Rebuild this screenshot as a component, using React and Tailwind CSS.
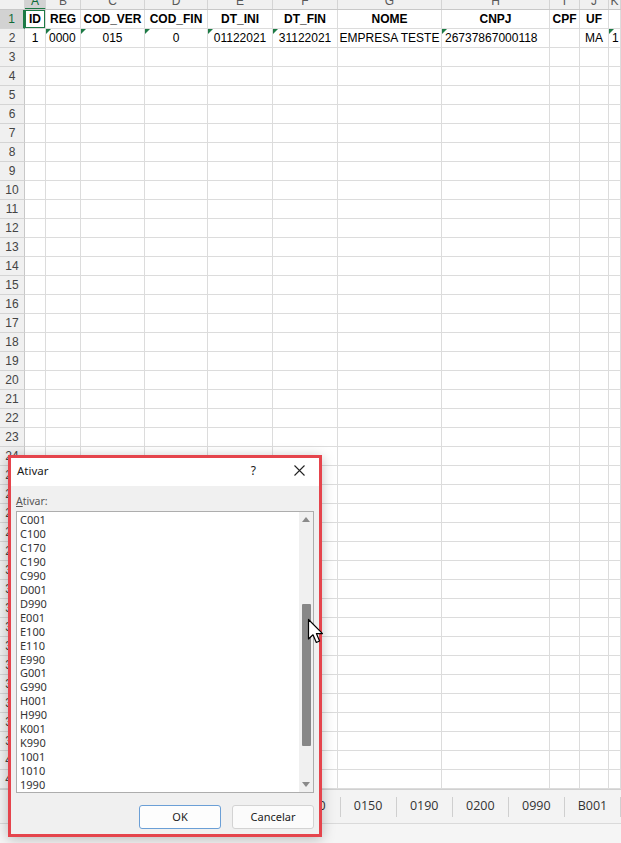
import React from 'react';

const COLS = ['A', 'B', 'C', 'D', 'E', 'F', 'G', 'H', 'I', 'J', 'K'];
const GRID = 'grid grid-cols-[25px_21px_35px_64px_63px_65px_65px_104px_108px_30px_29px_1fr]';

const ROW1 = ['ID', 'REG', 'COD_VER', 'COD_FIN', 'DT_INI', 'DT_FIN', 'NOME', 'CNPJ', 'CPF', 'UF', ''];
const ROW2 = [
  { v: '1', a: 'center' },
  { v: '0000', a: 'left', tri: true },
  { v: '015', a: 'center', tri: true },
  { v: '0', a: 'center', tri: true },
  { v: '01122021', a: 'center', tri: true },
  { v: '31122021', a: 'center', tri: true },
  { v: 'EMPRESA TESTE', a: 'center' },
  { v: '26737867000118', a: 'left', tri: true },
  { v: '', a: 'center' },
  { v: 'MA', a: 'center' },
  { v: '1', a: 'left', tri: true },
];

const ITEMS = [
  'C001', 'C100', 'C170', 'C190', 'C990', 'D001', 'D990', 'E001', 'E100', 'E110',
  'E990', 'G001', 'G990', 'H001', 'H990', 'K001', 'K990', '1001', '1010', '1990',
];

const TABS = ['0', '0150', '0190', '0200', '0990', 'B001'];

const Tri = () => (
  <span className="absolute left-0 top-0 w-0 h-0 border-t-[5px] border-t-[#1d7a45] border-r-[5px] border-r-transparent" />
);

const Sheet = () => {
  const rows = Array.from({ length: 41 }, (_, i) => i + 1);
  return (
    <div className="font-['Liberation_Sans',Arial,sans-serif] text-[12px] text-black">
      {/* column headers (cut off at top) */}
      <div className={`${GRID} h-[10px] bg-[#f0f0f0] border-b border-[#c8c8c8] overflow-hidden`}>
        <div className="border-r border-[#d4d4d4]" />
        {COLS.map((c, i) => (
          <div
            key={c}
            className={`relative border-r border-[#d4d4d4] text-center leading-[14px] text-[12px] ${
              i === 0 ? 'bg-[#d2d2d2] text-[#0f6b38] border-b-2 border-b-[#1d7a45]' : 'text-[#595959]'
            }`}
          >
            <div className="-mt-[6px]">{c}</div>
          </div>
        ))}
      </div>

      {rows.map((r) => (
        <div key={r} className={`${GRID} h-[19px]`}>
          <div
            className={`flex items-center justify-center border-b border-[#d4d4d4] text-[12px] ${
              r === 1
                ? 'bg-[#d2d2d2] text-[#0f6b38] border-r-2 border-r-[#1d7a45]'
                : 'bg-[#f0f0f0] text-[#444] border-r border-r-[#c8c8c8]'
            }`}
          >
            {r}
          </div>
          {COLS.map((c, i) => {
            let content = null;
            let align = 'justify-center';
            let tri = false;
            if (r === 1) {
              content = <span className="font-bold">{ROW1[i]}</span>;
            } else if (r === 2) {
              content = ROW2[i].v;
              align = ROW2[i].a === 'left' ? 'justify-start pl-[3px]' : 'justify-center';
              tri = ROW2[i].tri;
            }
            return (
              <div
                key={c}
                className={`relative flex items-center overflow-hidden whitespace-nowrap border-r border-b border-[#dcdcdc] bg-white ${align}`}
              >
                {tri && <Tri />}
                {content}
                {r === 1 && i === 0 && (
                  <span className="absolute -left-px -top-px -right-px -bottom-px border-2 border-[#1d7a45]" />
                )}
              </div>
            );
          })}
        </div>
      ))}

      {/* sheet tabs */}
      <div className="flex h-[34px] items-center bg-[#f3f3f3] border-t border-[#d0d0d0] pl-[300px] font-['Open_Sans',sans-serif] text-[12.5px] text-[#333]">
        {TABS.map((t, i) => (
          <div
            key={t}
            className={`flex h-[20px] items-center justify-center border-l border-[#cfcfcf] ${i === 0 ? 'w-[40px] justify-end pr-[14px]' : 'w-[57px]'}`}
          >
            {t}
          </div>
        ))}
        <div className="h-[20px] border-l border-[#cfcfcf]" />
      </div>
      <div className="h-[20px] bg-[#f5f5f5] border-t border-[#dadada]" />
    </div>
  );
};

const Cursor = () => (
  <svg className="absolute left-[307px] top-[618px]" width="20" height="28" viewBox="0 0 20 28">
    <path
      d="M1.5 1.5 L1.5 21 L6 16.8 L9.3 24.5 L12.6 23 L9.4 15.6 L15.5 15.6 Z"
      fill="#fff"
      stroke="#000"
      strokeWidth="1.2"
      strokeLinejoin="round"
    />
  </svg>
);

const Dialog = () => (
  <div className="absolute left-[8px] top-[455px] w-[314px] h-[382px] border-[3px] border-[#e5444c] shadow-[0_2px_12px_rgba(0,0,0,0.25)] bg-[#f0f0f0] flex flex-col font-['Noto_Sans',sans-serif]">
    <div className="h-[28px] bg-white flex items-center pl-[6px] pr-[14px] pb-[3px] text-[11.5px] text-[#1a1a1a]">
      <span className="flex-1">Ativar</span>
      <span className="mr-[38px] text-[12px]">?</span>
      <svg width="11" height="11" viewBox="0 0 11 11">
        <path d="M0.5 0.5 L10.5 10.5 M10.5 0.5 L0.5 10.5" stroke="#222" strokeWidth="1.1" />
      </svg>
    </div>
    <div className="flex-1 flex flex-col px-[5px] pt-[8px]">
      <div className="text-[10.5px] text-[#555] leading-[14px] mb-[3px]">
        <span className="underline">A</span>tivar:
      </div>
      <div className="h-[282px] bg-white border border-[#adadad] flex overflow-hidden">
        <div className="flex-1 pt-[1px] pl-[3px] text-[11px] text-[#333] leading-[13.95px]">
          {ITEMS.map((it) => (
            <div key={it}>{it}</div>
          ))}
        </div>
        <div className="w-[14px] bg-[#f0f0f0] flex flex-col items-center py-[5px]">
          <span className="w-0 h-0 border-l-[4px] border-r-[4px] border-b-[5px] border-l-transparent border-r-transparent border-b-[#8a8a8a]" />
          <div className="flex-1 w-full flex flex-col items-center pt-[82px] pb-[36px]">
            <div className="w-[9px] flex-1 bg-[#878787] rounded-[1px]" />
          </div>
          <span className="w-0 h-0 border-l-[4px] border-r-[4px] border-t-[5px] border-l-transparent border-r-transparent border-t-[#8a8a8a]" />
        </div>
      </div>
      <div className="flex justify-end gap-[11px] mt-[12px] text-[11px] text-[#222]">
        <button className="w-[82px] h-[24px] bg-[#fdfdfd] border border-[#6b9fd6] rounded-[3px]">OK</button>
        <button className="w-[82px] h-[24px] bg-[#fbfbfb] border border-[#d3d3d3] rounded-[3px]">Cancelar</button>
      </div>
    </div>
  </div>
);

export default function App() {
  return (
    <div className="relative w-[621px] h-[843px] overflow-hidden bg-white">
      <Sheet />
      <Dialog />
      <Cursor />
    </div>
  );
}
